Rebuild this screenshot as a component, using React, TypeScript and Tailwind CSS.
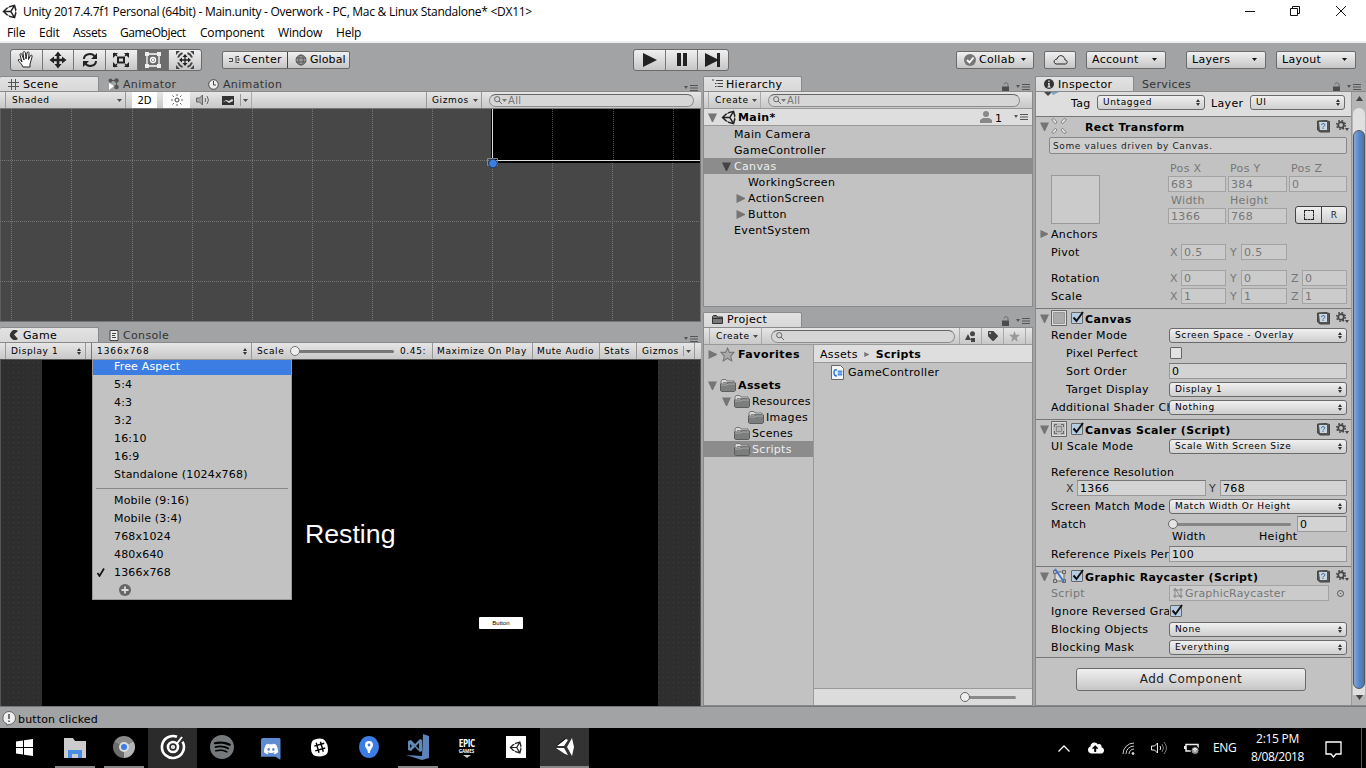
import React from "react";
import type { ReactNode } from "react";
import { SiSpotify, SiDiscord } from "react-icons/si";
import { FaChrome, FaCloudUploadAlt, FaTag } from "react-icons/fa";

const SMALL = "text-[9px] tracking-[0.62px] leading-[11px]";
const BTN = "border border-[#6b6b6b] bg-linear-to-b from-[#f0f0f0] to-[#c6c6c6]";
const STRIP = "flex shrink-0 border-t border-[#8a8a8a] bg-linear-to-b from-[#e6e6e6] to-[#c8c8c8] text-[9px] tracking-[0.62px] leading-[11px]";

function Unity({ className, fill = "#222" }: { className: string; fill?: string }) {
  return (
    <svg viewBox="0 0 512 512" className={className} fill={fill}>
      <path d="M498.11 206.4 445.31 14.72 248.2 66.08 219 116.14l-59.2-.43L15.54 256l144.28 140.32 59.17-.43 29.24 50 197.08 51.36 52.8-191.62-30-49.63ZM223.77 124.2 374.55 86.51 288 232.33H114.87Zm0 263.63L114.87 279.71H288l86.55 145.81Zm193 14L330.17 256l86.58-145.84L458.56 256Z" />
    </svg>
  );
}

function Tri({ dir, fill = "#757575", size = "w-[9px] h-[9px]" }: { dir: "down" | "right"; fill?: string; size?: string }) {
  return (
    <svg viewBox="0 0 9 9" className={`shrink-0 ${size}`} fill={fill}>
      {dir === "down" ? <path d="M0 .5h9L5 9H4z" /> : <path d="M.5 0 9 4v1L.5 9z" />}
    </svg>
  );
}

function Caret({ className = "", fill = "#4a4a4a" }: { className?: string; fill?: string }) {
  return (
    <svg viewBox="0 0 5 3" className={`h-[3px] w-[5px] shrink-0 ${className}`} fill={fill}>
      <path d="M0 0h5L2.500 3z" />
    </svg>
  );
}

function UpDown({ className = "" }: { className?: string }) {
  return (
    <svg viewBox="0 0 4 7" className={`h-[7px] w-[4px] shrink-0 ${className}`} fill="#333">
      <path d="M0 3 2 0l2 3zM0 4h4L2 7z" />
    </svg>
  );
}

function MenuGlyph() {
  return (
    <svg viewBox="0 0 14 6" className="h-[6px] w-[14px] shrink-0" fill="#555">
      <path d="M0 1h4L2 4zM6 0h8v1H6zM6 2.500h8v1H6zM6 5h8v1H6z" />
    </svg>
  );
}

function Lock() {
  return (
    <svg viewBox="0 0 9 10" className="mr-[6px] h-[10px] w-[9px]">
      <path d="M1 4.500h7V10H1z" fill="#4c4c4c" />
      <path d="M7 5V2.500C7 .2 3 .2 3 2.500" fill="none" stroke="#666" />
    </svg>
  );
}

function Folder({ className = "" }: { className?: string }) {
  return (
    <svg viewBox="0 0 16 13" className={`h-[13px] w-4 shrink-0 ${className}`}>
      <path d="M1 12V2l1-1.500h4l1 1.500h7v3" fill="#d8d8d8" stroke="#777" />
      <path d="M3 3.500h10" stroke="#888" />
      <path d="M.5 5h6l1-1h8v7.500l-1 1H1.500l-1-1z" fill="#7c7e7e" stroke="#5d5f5f" />
      <path d="M1 6h6l1-1h7" stroke="#aaa" fill="none" />
    </svg>
  );
}

function Search({ text = "", width }: { text?: string; width: string }) {
  return (
    <div className={`flex h-[13px] items-center rounded-full border border-[#8c8c8c] border-t-[#666] bg-[#d6d6d6] pl-[4px] text-[10px] tracking-[0.300px] text-[#777] ${width}`}>
      <svg viewBox="0 0 8 8" className="size-2" fill="none" stroke="#666">
        <circle cx="3.200" cy="3.200" r="2.600" />
        <path d="m5 5 3 3" />
      </svg>
      {text && <Caret className="mr-px" fill="#777" />}
      {text}
    </div>
  );
}

function Tab({ children, width, active = true }: { children: ReactNode; width: string; active?: boolean }) {
  return (
    <div className={`flex h-[15px] items-center border-t text-[11px] tracking-[0.350px] ${width} ${active ? "rounded-t-[2px] border-r border-[#8a8a8a] bg-linear-to-b from-[#e2e2e2] to-[#d8d8d8]" : "border-transparent text-[#333]"}`}>
      {children}
    </div>
  );
}

/* ---------- Top bars ---------- */

function TitleBar() {
  return (
    <div className="bg-white font-['Open_Sans',sans-serif] text-xs text-black">
      <div className="flex h-[22px] items-center pl-[2px]">
        <Unity className="mr-[6px] size-[15px]" />
        <span className="pt-[2px] whitespace-nowrap tracking-[-0.268px]">Unity 2017.4.7f1 Personal (64bit) - Main.unity - Overwork - PC, Mac &amp; Linux Standalone* &lt;DX11&gt;</span>
        <svg viewBox="0 0 110 12" className="mr-[12px] ml-auto h-3 w-[110px]" fill="none" stroke="#111">
          <path d="M1 6.500h10" />
          <path d="M46.500 3.500h7v7h-7zM48.500 3v-1.500h7v7H54" />
          <path d="m92 1 10 10m0-10-10 10" />
        </svg>
      </div>
      <div className="flex h-[21px] items-center border-b-2 border-[#eee] pt-[2px] pl-[7px] tracking-[-0.200px]">
        <span className="w-[32px]">File</span>
        <span className="w-[34px]">Edit</span>
        <span className="w-[47px] tracking-[-0.350px]">Assets</span>
        <span className="w-[80px] tracking-[-0.400px]">GameObject</span>
        <span className="w-[78px]">Component</span>
        <span className="w-[58px]">Window</span>
        <span>Help</span>
      </div>
    </div>
  );
}

function ToolIcon({ kind }: { kind: number }) {
  const light = kind === 4;
  return (
    <svg viewBox="0 0 20 20" className="size-5" fill="none" stroke={light ? "#fff" : "#222"} strokeWidth="1.300">
      {kind === 0 && <path d="M7 17c-1-3-4-5-5-7 1-1 2-1 4 2L4 5c0-2 2-2 2 0l2 5-1-7c0-2 2-2 2.500 0l.5 6 1-6c.5-2 2.500-1 2 .5l-.5 6 2-4c1-1 2 0 1.500 1.500L14 14v3z" fill="#fff" strokeWidth="1" />}
      {kind === 1 && <path d="M8.700 8.700V6H6.500L10 1.500 13.500 6h-2.200v2.700H14V6.500l4.500 3.500-4.500 3.500v-2.200h-2.700V14h2.200L10 18.500 6.500 14h2.200v-2.700H6v2.200L1.500 10 6 6.500v2.200z" fill="#222" stroke="none" />}
      {kind === 2 && <g strokeWidth="2"><path d="M4 9c0-5 8-7 11-2M16 11c0 5-8 7-11 2" /><path d="M17 3v6h-6zM3 17v-6h6z" fill="#222" stroke="none" /></g>}
      {kind === 3 && <g><path d="M7 7.500h6v5H7z" strokeWidth="2" /><path d="M6 6 3 3m11 3 3-3M6 14l-3 3m11-3 3 3" /><path d="M2 3h5L2 8zM18 3v5l-5-5zM2 17v-5l5 5zM18 17h-5l5-5z" fill="#222" stroke="none" /></g>}
      {kind === 4 && <g><path d="M4 4h12v12H4z" /><path d="M2 2h4v4H2zM14 2h4v4h-4zM2 14h4v4H2zM14 14h4v4h-4z" fill="#eee" stroke="none" /><circle cx="10" cy="10" r="2.500" /><circle cx="10" cy="10" r=".5" /></g>}
      {kind === 5 && <g><path d="M3 7.500A8 8 0 0 1 7.500 3M12.500 3A8 8 0 0 1 17 7.500M17 12.500a8 8 0 0 1-4.500 4.500M7.500 17A8 8 0 0 1 3 12.500" stroke="#444" strokeWidth="2" /><path d="M1 5V1h4zM15 1h4v4zM19 15v4h-4zM5 19H1v-4z" fill="#444" stroke="none" /><path d="M10 6v8M6 10h8" /><path d="m10 4 2.500 3h-5zM10 16l-2.500-3h5zM4 10l3-2.500v5zM16 10l-3 2.500v-5z" fill="#222" stroke="none" /></g>}
    </svg>
  );
}

function TopButton({ label, width }: { label: string; width: string }) {
  return (
    <div className={`flex h-[18px] items-center rounded-[2px] pl-[5px] ${BTN} ${width}`}>
      {label}
      <Caret className="mr-[8px] ml-auto" fill="#111" />
    </div>
  );
}

function Toolbar() {
  return (
    <div className="flex h-[33px] shrink-0 items-center text-[11px] tracking-[0.300px]">
      <div className={`ml-[10px] flex h-[22px] w-[192px] overflow-hidden rounded-[3px] ${BTN}`}>
        {[0, 1, 2, 3, 4, 5].map((k) => (
          <div key={k} className={`flex w-8 items-center justify-center border-r border-[#777] last:border-0 ${k === 4 ? "bg-[#6c6c6c]" : ""}`}>
            <ToolIcon kind={k} />
          </div>
        ))}
      </div>
      <div className={`ml-[20px] flex h-[18px] w-[128px] rounded-[2px] ${BTN}`}>
        <div className="flex w-[65px] items-center border-r border-[#444] pl-[6px]">
          <svg viewBox="0 0 11 8" className="mr-[3px] h-2 w-[11px]" fill="none" stroke="#444"><path d="M0 2.500h3.500v3H0M7 0v7M7.500.5H10M7.500 6.500H10" /><path d="M8.500 2h2v3h-2z" fill="#777" stroke="none" /></svg>
          Center
        </div>
        <div className="flex items-center pl-[7px]">
          <svg viewBox="0 0 12 12" className="mr-[3px] size-3" fill="#999" stroke="#555" strokeWidth=".9"><circle cx="6" cy="6" r="5" /><path d="M1 4h10M1 8h10" fill="none" /><ellipse cx="6" cy="6" rx="2.300" ry="5" fill="none" /></svg>
          <span className="tracking-[0.100px]">Global</span>
        </div>
      </div>
      <div className={`ml-[283px] flex h-[22px] w-[96px] rounded-[3px] ${BTN}`}>
        <div className="flex w-8 items-center justify-center border-r border-[#777]"><svg viewBox="0 0 14 14" className="size-[14px]" fill="#222"><path d="M0 0v14l14-7z" /></svg></div>
        <div className="flex w-8 items-center justify-center border-r border-[#777]"><svg viewBox="0 0 10 13" className="h-[13px] w-[10px]" fill="#222"><path d="M0 0h4v13H0zM6 0h4v13H6z" /></svg></div>
        <div className="flex w-[30px] items-center justify-center"><svg viewBox="0 0 16 14" className="h-[14px] w-4" fill="#222"><path d="M0 0v14l12-6v6h3V0h-3v6z" /></svg></div>
      </div>
      <div className={`ml-[227px] flex h-[18px] w-[78px] items-center rounded-[2px] pl-[7px] ${BTN}`}>
        <svg viewBox="0 0 12 12" className="mr-[3px] size-3"><circle cx="6" cy="6" r="6" fill="#777" /><path d="m3 6 2.500 2.500L9.500 3.500" fill="none" stroke="#fff" strokeWidth="1.800" /></svg>
        Collab
        <Caret className="mr-[7px] ml-auto" fill="#111" />
      </div>
      <div className={`ml-[10px] flex h-[18px] w-[32px] items-center justify-center rounded-[2px] ${BTN}`}>
        <svg viewBox="0 0 15 11" className="h-[11px] w-[15px]" fill="none" stroke="#222"><path d="M3.500 10h9c2.500-.5 2-4-.5-4 0-4-6-7-8-1-4 .5-3.500 5-.5 5z" /></svg>
      </div>
      <div className="ml-[10px]"><TopButton label="Account" width="w-20" /></div>
      <div className="ml-[20px]"><TopButton label="Layers" width="w-20" /></div>
      <div className="ml-[10px]"><TopButton label="Layout" width="w-20" /></div>
    </div>
  );
}

/* ---------- Scene and Game ---------- */

function ScenePanel() {
  return (
    <section className="flex h-[246px] flex-col">
      <div className="flex h-[15px] items-center">
        <Tab width="w-[99px]">
          <svg viewBox="0 0 11 11" className="mr-[4px] ml-[8px] size-[11px]" stroke="#555"><path d="M3.500 0v11M7.500 0v11M0 3.500h11M0 7.500h11" /></svg>
          Scene
        </Tab>
        <Tab width="w-[109px]" active={false}>
          <svg viewBox="0 0 12 12" className="mr-[3px] ml-[9px] size-3"><g fill="#555"><circle cx="2.500" cy="2.500" r="2" /><circle cx="8.500" cy="2.500" r="2.300" /><circle cx="8.500" cy="9" r="2.300" /><path d="M2 2h6v1H2zM8 3h1v6H8z" /></g><path d="M1 5v7l5-4z" fill="#fff" /></svg>
          Animator
        </Tab>
        <Tab width="w-[100px]" active={false}>
          <svg viewBox="0 0 11 11" className="mr-[4px] size-[11px]" fill="#eee" stroke="#444"><circle cx="5.500" cy="5.500" r="4.800" /><path d="M5.500 2v4H8" fill="none" /></svg>
          Animation
        </Tab>
        <div className="mt-[8px] mr-[3px] ml-auto"><MenuGlyph /></div>
      </div>
      <div className={`${STRIP} h-[18px] items-stretch border-b border-b-[#777]`}>
        <div className="w-[6px] border-r border-[#999]" />
        <div className="flex w-[120px] items-center border-r border-[#999] pl-[6px]">Shaded<Caret className="mr-[3px] ml-auto" /></div>
        <div className="ml-[6px] flex w-[25px] items-center justify-center bg-white text-[10px] tracking-normal">2D</div>
        <div className="ml-[6px] flex w-[27px] items-center justify-center bg-[#fafafa]">
          <svg viewBox="0 0 12 12" className="size-3" fill="none" stroke="#444"><circle cx="6" cy="6" r="2" /><path d="M6 0v2M6 10v2M0 6h2M10 6h2M1.500 1.500l1.500 1.500M9 9l1.500 1.500M10.500 1.500 9 3M3 9l-1.500 1.500" strokeWidth=".8" /></svg>
        </div>
        <div className="flex w-[26px] items-center justify-center">
          <svg viewBox="0 0 14 12" className="h-3 w-[14px]" fill="#aaa" stroke="#666"><path d="M.5 4h3l3-3v10l-3-3h-3z" /><path d="M9 4q1.500 2 0 4M11 2q3 4 0 8" fill="none" /></svg>
        </div>
        <div className="flex w-[36px] items-center border-r border-[#aaa] pl-[6px]">
          <svg viewBox="0 0 12 9" className="mr-[6px] h-[9px] w-3"><path fill="#333" d="M0 0h12v9H0z" /><path d="M1 6l3-2 3 1 3-2 1 1v4H1z" fill="#ddd" /><path d="M1 6l3-1 3 2 4-2v3H1z" fill="#333" /></svg>
          <div className="h-3 border-l border-[#999]" /><Caret className="ml-[2px]" />
        </div>
        <div className="ml-auto flex w-[56px] items-center border-x border-[#999] pl-[5px]">Gizmos<Caret className="mr-[3px] ml-auto" /></div>
        <div className="mr-[7px] ml-[7px] flex items-center"><Search text="All" width="w-[205px]" /></div>
      </div>
      <svg viewBox="0 0 701 213" className="h-[213px] w-[701px] shrink-0 bg-[#474747]">
        <path d="M491 0h210v54H491z" fill="#000" />
        <path d="M11.500 0v213M71.500 0v213M132.500 0v213M192.500 0v213M252.500 0v213M312.500 0v213M372.500 0v213M432.500 0v213M492.500 54v159M552.500 54v159M612.500 54v159M672.500 54v159M0 51.500h491M0 112.500h701M0 172.500h701" stroke="#777" strokeDasharray="1 1" />
        <path d="M552.500 0v51M613.500 0v51M673.500 0v51" stroke="#555" strokeDasharray="1 1" />
        <path d="M492.500 0v52M490 51.500h211" stroke="#ddd" />
        <path d="M487.500 49.500h10v7h-10z" stroke="#888" fill="none" />
        <circle cx="493" cy="54.500" r="4.300" fill="#3d7fe0" stroke="#153969" />
        <path d="M0 0v213M700.500 0v213M0 212.500h701" stroke="#777" />
      </svg>
    </section>
  );
}

function AspectMenu() {
  const first = ["5:4", "4:3", "3:2", "16:10", "16:9", "Standalone (1024x768)"];
  const second = ["Mobile (9:16)", "Mobile (3:4)", "768x1024", "480x640", "1366x768"];
  return (
    <div className="absolute top-[-1px] left-[91px] z-10 flex h-[241px] w-[200px] flex-col border border-[#999] bg-[#c2c2c2] text-[11px] tracking-[0.180px]">
      <div className="flex h-[15px] items-center bg-[#3c7de4] pb-[2px] pl-[21px] text-white">Free Aspect</div>
      {first.map((t) => <div key={t} className="flex h-[18px] items-center pl-[21px]">{t}</div>)}
      <div className="mx-[3px] mt-[5px] mb-[2px] border-t border-[#888]" />
      {second.map((t) => (
        <div key={t} className="flex h-[18px] items-center">
          <span className="flex w-[21px] pl-[4px]">
            {t === "1366x768" && <svg viewBox="0 0 8 9" className="h-[9px] w-2" fill="none" stroke="#111" strokeWidth="1.700"><path d="m.5 5 2 3L7 .5" /></svg>}
          </span>
          {t}
        </div>
      ))}
      <svg viewBox="0 0 12 12" className="mt-[3px] ml-[26px] size-3"><circle cx="6" cy="6" r="6" fill="#666" /><path d="M6 2.500v7M2.500 6h7" stroke="#ddd" strokeWidth="1.800" /></svg>
    </div>
  );
}

function GamePanel() {
  return (
    <section className="mt-[5px] flex grow flex-col">
      <div className="flex h-[15px] items-center">
        <Tab width="w-[99px]">
          <svg viewBox="0 0 10 10" className="mr-[4px] ml-[9px] size-[10px]" fill="#333"><path d="M9 1 5 4.500 9 9A5 5 0 1 1 9 1z" /></svg>
          Game
        </Tab>
        <Tab width="w-[100px]" active={false}>
          <svg viewBox="0 0 10 11" className="mr-[4px] ml-[10px] h-[11px] w-[10px]" fill="#eee" stroke="#444"><path d="M1 .5h8v10H1zM3 3.500h4M3 5.500h3M3 7.500h4" /></svg>
          Console
        </Tab>
        <div className="mt-[8px] mr-[3px] ml-auto"><MenuGlyph /></div>
      </div>
      <div className={`${STRIP} h-[18px] items-stretch border-b border-b-[#555]`}>
        <div className="w-[6px] border-r border-[#999]" />
        <div className="flex w-[80px] items-center border-r border-[#999] pl-[5px]">Display 1<UpDown className="mr-[4px] ml-auto" /></div>
        <div className="w-[6px] border-r border-[#777]" />
        <div className="flex w-[160px] items-center border-r border-[#999] pl-[5px] tracking-[0.900px]">1366x768<UpDown className="mr-[4px] ml-auto" /></div>
        <div className="flex w-[181px] items-center border-r border-[#999] pl-[5px]">
          <span className="w-[33px]">Scale</span>
          <div className="z-10 -mr-1 size-[10px] rounded-full border border-[#777] bg-[#eee]" />
          <div className="mr-[6px] h-[3px] w-[98px] rounded bg-[#777]" />
          0.45:
        </div>
        <div className="flex w-[100px] items-center border-r border-[#999] pl-[4px]">Maximize On Play</div>
        <div className="flex w-[67px] items-center border-r border-[#999] pl-[4px]">Mute Audio</div>
        <div className="flex w-[37px] items-center border-r border-[#999] pl-[4px]">Stats</div>
        <div className="flex w-[58px] items-center border-r border-[#999] pl-[5px]">
          Gizmos<div className="mr-[2px] ml-auto h-[10px] border-l border-[#999]" /><Caret className="mr-[3px]" />
        </div>
      </div>
      <div className="relative flex grow border-x border-[#555] bg-[#2e2e2e] bg-[radial-gradient(#3d3d3d_0.700px,transparent_0.700px)] bg-size-[5px_5px]">
        <AspectMenu />
        <div className="ml-[41px] w-[616px] bg-black font-['Liberation_Sans',Arial,sans-serif]">
          <div className="mt-[158px] ml-[263px] text-[26.700px] leading-8 text-white">Resting</div>
          <div className="mt-[67px] ml-[437px] flex h-[12px] w-[44px] items-center justify-center rounded-[1px] bg-white text-[6px] text-black">Button</div>
        </div>
      </div>
    </section>
  );
}

/* ---------- Hierarchy and Project ---------- */

function HierarchyPanel() {
  return (
    <section className="flex h-[231px] flex-col">
      <div className="flex h-[15px] items-center">
        <Tab width="w-[99px] border-l">
          <svg viewBox="0 0 11 10" className="mr-[3px] ml-[8px] h-[10px] w-[11px]" stroke="#444"><path d="M0 1h2M4 1.500h7M3 4.500h1.500M5.500 4.500H11M3 7.500h1.500M5.500 7.500H11" /></svg>
          Hierarchy
        </Tab>
        <div className="mt-[6px] mr-[3px] ml-auto flex items-center"><Lock /><MenuGlyph /></div>
      </div>
      <div className="flex grow flex-col border border-t-0 border-[#8a8a8a] bg-[#c2c2c2]">
        <div className={`${STRIP} h-[18px] border-b border-b-[#999]`}>
          <div className="w-[5px] border-r border-[#aaa]" />
          <div className="mr-[7px] flex w-[52px] items-center border-r border-[#aaa] pl-[6px]">Create<Caret className="mr-[3px] ml-auto" /></div>
          <div className="flex items-center"><Search text="All" width="w-[252px]" /></div>
        </div>
        <div className="flex h-[17px] shrink-0 items-center border-b border-[#999] bg-[#dedede] pl-[4px]">
          <Tri dir="down" />
          <Unity className="mr-[2px] ml-[4px] size-[15px]" />
          <span className="pt-px text-[11px] font-bold tracking-[0.400px]">Main*</span>
          <svg viewBox="0 0 12 12" className="mr-[3px] ml-auto size-3" fill="#888"><circle cx="6" cy="3" r="3" /><path d="M0 12V9l3-2h6l3 2v3z" /></svg>
          <span className="pt-[2px]">1</span><div className="mr-[4px] ml-[12px] flex"><MenuGlyph /></div>
        </div>
        <div className="text-[11px] leading-[18px] tracking-[0.350px]">
          <div className="h-4 pl-[30px]">Main Camera</div>
          <div className="h-4 pl-[30px]">GameController</div>
          <div className="flex h-4 items-center gap-[3px] bg-[#8c8c8c] pl-[18px] text-[#eee]"><Tri dir="down" fill="#444" /><span className="pt-[2px]">Canvas</span></div>
          <div className="h-4 pl-[44px]">WorkingScreen</div>
          <div className="flex h-4 items-center gap-[3px] pl-[32px]"><Tri dir="right" /><span className="pt-[2px]">ActionScreen</span></div>
          <div className="flex h-4 items-center gap-[3px] pl-[32px]"><Tri dir="right" /><span className="pt-[2px]">Button</span></div>
          <div className="h-4 pl-[30px]">EventSystem</div>
        </div>
      </div>
    </section>
  );
}

function ProjectPanel() {
  return (
    <section className="mt-[4px] flex grow flex-col">
      <div className="flex h-[16px] items-end">
        <Tab width="w-[99px] border-l pb-[2px]">
          <svg viewBox="0 0 11 9" className="mr-[4px] ml-[8px] h-[9px] w-[11px]" fill="#777" stroke="#333"><path d="M.5 8.500v-7l1-1h3l1 1.500h5v6.500zM1 3.500h9" /></svg>
          Project
        </Tab>
        <div className="mr-[3px] mb-px ml-auto flex items-center"><Lock /><MenuGlyph /></div>
      </div>
      <div className="flex grow flex-col border border-t-0 border-[#8a8a8a] bg-[#c2c2c2]">
        <div className={`${STRIP} h-[18px] border-b border-b-[#999]`}>
          <div className="w-[6px] border-r border-[#aaa]" />
          <div className="mr-[9px] flex w-[52px] items-center border-r border-[#aaa] pl-[6px]">Create<Caret className="mr-[3px] ml-auto" /></div>
          <div className="flex items-center"><Search width="w-[184px]" /></div>
          <div className="ml-[4px] flex w-[23px] items-center justify-center border-x border-[#aaa]"><svg viewBox="0 0 11 11" className="size-[11px]" fill="#444"><path d="M3 3l3 6H0zM6 7h4v4H6z" /><circle cx="7.500" cy="2.800" r="2.500" /></svg></div>
          <div className="flex w-[22px] items-center justify-center border-r border-[#aaa]"><FaTag className="size-[10px] text-[#444]" /></div>
          <div className="flex w-[22px] items-center justify-center border-r border-[#aaa]"><svg viewBox="0 0 12 12" className="size-[11px]" fill="#999"><path d="m6 0 1.500 4H12L8.500 7l1 5L6 9l-3.500 3 1-5L0 4h4.500z" /></svg></div>
        </div>
        <div className="flex grow">
          <div className="w-[110px] overflow-hidden border-r border-[#999] text-[11px] leading-4 tracking-[0.300px]">
            <div className="flex h-[18px] items-center pl-[4px] font-bold tracking-[0.500px]">
              <Tri dir="right" />
              <svg viewBox="0 0 14 14" className="mr-[3px] ml-[3px] size-[15px] shrink-0" fill="#aaa" stroke="#777"><path d="m7 1 1.800 4H13l-3 3.500 1 4.500-4-2.500L3 13l1-4.500L1 5h4.200z" /></svg>
              <span className="pt-px">Favorites</span>
            </div>
            <div className="mt-[14px] flex h-4 items-center pl-[4px] font-bold tracking-[0.400px]"><Tri dir="down" /><Folder className="mr-[2px] ml-[3px]" /><span className="pt-px">Assets</span></div>
            <div className="flex h-4 items-center pl-[18px]"><Tri dir="down" /><Folder className="mr-[2px] ml-[3px]" /><span className="pt-[2px]">Resources</span></div>
            <div className="flex h-4 items-center pl-[44px]"><Folder className="mr-[2px]" /><span className="pt-[2px]">Images</span></div>
            <div className="flex h-4 items-center pl-[30px]"><Folder className="mr-[2px]" /><span className="pt-[2px]">Scenes</span></div>
            <div className="flex h-4 items-center bg-[#8c8c8c] pl-[30px] text-[#eee]"><Folder className="mr-[2px]" /><span className="pt-[2px]">Scripts</span></div>
          </div>
          <div className="flex grow flex-col text-[11px] tracking-[0.320px]">
            <div className="flex h-[18px] items-center border-b border-[#999] bg-[#dedede] pt-px pl-[6px]">Assets<Tri dir="right" size="size-[5px] ml-[6px] mr-[7px]" /><b className="tracking-[0.300px]">Scripts</b></div>
            <div className="flex h-[18px] items-center pl-[17px]">
              <svg viewBox="0 0 13 15" className="mr-[4px] h-[15px] w-[13px]" fill="#f4f4f4" stroke="#666"><path d="M.5.5h9l3 3v11H.5z" /><path d="M6 5Q3 4 3 7.500T6 11" fill="none" stroke="#2877dd" strokeWidth="1.500" /><path d="M8 5v6M10 5v6M6.500 6.800h5M6.500 9.200h5" stroke="#2877dd" strokeWidth=".9" /></svg>
              GameController
            </div>
            <div className="mt-auto flex h-[17px] items-center border-t border-[#999] bg-[#dcdcdc] pl-[146px]">
              <div className="z-10 size-[10px] rounded-full border border-[#666] bg-[#eee]" />
              <div className="-ml-1 h-[3px] w-[50px] rounded bg-[#8a8a8a]" />
            </div>
          </div>
        </div>
      </div>
    </section>
  );
}

/* ---------- Inspector ---------- */

function Field({ children, className = "w-[178px]", off = false }: { children: ReactNode; className?: string; off?: boolean }) {
  return <div className={`flex h-4 shrink-0 items-center border pl-[2px] ${off ? "border-[#a3a3a3] bg-[#cbcbcb] text-[#777]" : "border-[#999] border-t-[#777] bg-[#d3d3d3]"} ${className}`}>{children}</div>;
}

function Popup({ children, className = "w-[178px]" }: { children: ReactNode; className?: string }) {
  return <div className={`flex h-[15px] shrink-0 items-center rounded-[3px] border border-[#6b6b6b] bg-linear-to-b from-[#f0f0f0] to-[#cfcfcf] pl-[5px] ${SMALL} ${className}`}>{children}<UpDown className="mr-[4px] ml-auto" /></div>;
}

function Check({ on }: { on: boolean }) {
  return (
    <div className={`size-3 shrink-0 rounded-[1px] border border-[#666] ${on ? "bg-[#b4cde2]" : "bg-[#e2e2e2]"}`}>
      {on && <svg viewBox="0 0 12 12" className="-mt-[2px] size-3" fill="none" stroke="#111" strokeWidth="2"><path d="m1.500 6.500 3 3.500L11 1" /></svg>}
    </div>
  );
}

function Row({ label, children, mt = "mt-[2px]", indent = false, dim = false }: { label: string; children?: ReactNode; mt?: string; indent?: boolean; dim?: boolean }) {
  return (
    <div className={`flex h-4 shrink-0 items-center ${mt}`}>
      <div className={`h-4 shrink-0 leading-[18px] whitespace-nowrap ${children ? "w-[133px] overflow-hidden" : ""} ${indent ? "pl-[30px]" : "pl-[15px]"} ${dim ? "text-[#777]" : ""}`}>{label}</div>
      {children}
    </div>
  );
}

function Header({ title, icon, check = true }: { title: string; icon: ReactNode; check?: boolean }) {
  return (
    <div className="flex h-4 shrink-0 items-center pl-[4px]">
      <Tri dir="down" />
      <div className="ml-[2px] flex w-[16px]">{icon}</div>
      <div className="ml-[4px] w-[14px]">{check && <Check on />}</div>
      <b className="pt-[2px] tracking-[0.370px]">{title}</b>
      <svg viewBox="0 0 13 13" className="ml-auto size-[13px]"><path d="M.5 1 9 .5l3.500 1V12H3L.5 10z" fill="#555" stroke="#444" /><path d="M2 2h8v8H3z" fill="#ccd6df" /><path d="M4 5q2-3 4-.5c0 2-2 1-2 3M6 8v1" fill="none" stroke="#3d71aa" /></svg>
      <svg viewBox="0 0 13 12" className="mr-[2px] ml-[6px] h-3 w-[13px]"><circle cx="5" cy="5" r="2.800" fill="none" stroke="#444" strokeWidth="1.800" /><circle cx="5" cy="5" r="4.300" fill="none" stroke="#444" strokeWidth="1.500" strokeDasharray="1.700 1.680" /><path d="M9 8h4l-2 3z" fill="#444" /></svg>
    </div>
  );
}

function Rule({ className }: { className: string }) {
  return <div className={`shrink-0 border-t border-[#777] ${className}`} />;
}

function Axis({ name, value, width, field, off = true }: { name: string; value: string; width: string; field: string; off?: boolean }) {
  return (
    <div className={`flex shrink-0 items-center ${width}`}>
      <span className={`w-[12px] pl-px ${off ? "text-[#777]" : "text-[#333]"}`}>{name}</span>
      <Field off={off} className={field}>{value}</Field>
    </div>
  );
}

function Axes({ values }: { values: string[] }) {
  return (
    <div className="flex">
      <Axis name="X" value={values[0]} width="w-[60px]" field="w-[45px]" />
      <Axis name="Y" value={values[1]} width="w-[61px]" field="w-[46px]" />
      {values[2] && <Axis name="Z" value={values[2]} width="w-[57px]" field="w-[45px]" />}
    </div>
  );
}

function FrameIcon({ kind }: { kind: "canvas" | "scaler" | "ray" | "rect" }) {
  return (
    <svg viewBox="0 0 16 16" className="size-4" fill="none" stroke="#666">
      {kind === "canvas" && <g><path d="M.5.5h15v15H.5z" fill="#ddd" /><path d="M2.500 2.500h11v11h-11z" fill="#aaa" stroke="#999" /></g>}
      {kind === "scaler" && <g><path d="M.5.5h15v15H.5z" fill="#ddd" /><path d="M2 2h12v12H2z" fill="#bbb" stroke="none" /><path d="M3.500 6V3.500H6M10 3.500h2.500V6M12.500 10v2.500H10M6 12.500H3.500V10" /><path d="M5.500 5.500h5v5h-5z" stroke="#888" /></g>}
      {kind === "ray" && <g><path d="M4 4h9v9H4z" fill="#ddd" /><path d="M2.500 2.500h3v3h-3zM11.500 2.500h3v3h-3zM2.500 11.500h3v3h-3zM11.500 11.500h3v3h-3z" fill="#bbb" /><path d="m4 1 9 13" stroke="#4076cd" strokeWidth="2" /></g>}
      {kind === "rect" && <path d="M.5 1.500 3 .5l3 3.500-1.500 2zM15.500 1.500 13 .5 10 4l1.500 2zM.5 14.500 3 15.500 6 12l-1.500-2zM15.500 14.500l-2.500 1-3-3.500 1.500-2z" fill="#e2e2e2" stroke="#888" strokeLinejoin="round" />}
    </svg>
  );
}

function Inspector() {
  return (
    <section className="ml-[2px] flex w-[331px] flex-col">
      <div className="flex h-[15px] items-center">
        <Tab width="w-[99px] border-l">
          <svg viewBox="0 0 10 10" className="mr-[4px] ml-[8px] size-[10px]"><circle cx="5" cy="5" r="5" fill="#333" /><path d="M5 1.500v1.500M4 4.500h1V8M3.500 8h3" stroke="#fff" fill="none" strokeWidth="1.200" /></svg>
          Inspector
        </Tab>
        <Tab width="w-[80px] pl-[8px]" active={false}>Services</Tab>
        <div className="mt-[6px] mr-[5px] ml-auto flex items-center"><Lock /><MenuGlyph /></div>
      </div>
      <div className="flex h-[615px] border-t border-b border-l border-[#8a8a8a] bg-[#c2c2c2]">
        <div className="flex w-[315px] flex-col text-[11px] tracking-[0.350px]">
          <div className="flex h-[24px] shrink-0 items-center bg-[#dedede] pb-[3px]">
            <svg viewBox="0 0 15 4" className="mb-[17px] ml-[8px] h-1 w-[15px]"><path d="M0 0h8L4 4z" fill="#444" /><path d="M7 0h8l-6 3z" fill="#76a3ca" /></svg>
            <span className="ml-[12px] w-[26px] pt-[2px]">Tag</span>
            <Popup className="w-[108px]">Untagged</Popup>
            <span className="ml-[6px] w-[39px] pt-[2px]">Layer</span>
            <Popup className="w-[95px]">UI</Popup>
          </div>
          <Rule className="mb-[1px]" />
          <Header title="Rect Transform" check={false} icon={<FrameIcon kind="rect" />} />
          <div className={`mt-[3px] ml-[13px] flex h-[17px] w-[298px] shrink-0 items-center rounded-[2px] border border-[#888] bg-[#cecece] pt-px pl-[3px] text-[#222] ${SMALL}`}>Some values driven by Canvas.</div>
          <div className="mt-[6px] flex h-[65px] shrink-0 text-[#777]">
            <div className="mt-[15px] mr-[68px] ml-[15px] h-[49px] w-[49px] border border-[#999] bg-[#cbcbcb]" />
            <div className="mr-[2px] w-[58px]">
              <div className="h-4 pl-[2px] leading-[17px]">Pos X</div><Field off className="w-[58px]">683</Field>
              <div className="h-4 pl-[3px] leading-[17px]">Width</div><Field off className="w-[58px]">1366</Field>
            </div>
            <div className="mr-[2px] w-[59px]">
              <div className="h-4 pl-[2px] leading-[17px]">Pos Y</div><Field off className="w-[59px]">384</Field>
              <div className="h-4 pl-[2px] leading-[17px]">Height</div><Field off className="w-[59px]">768</Field>
            </div>
            <div className="w-[58px]">
              <div className="h-4 pl-[2px] leading-[17px]">Pos Z</div><Field off className="w-[58px]">0</Field>
              <div className="mt-[14px] ml-[6px] flex h-[18px] w-[52px] rounded-[3px] border border-[#444] bg-linear-to-b from-[#f0f0f0] to-[#cfcfcf] text-[9px] text-[#222]">
                <div className="flex w-[26px] items-center justify-center border-r border-[#444]"><div className="size-[10px] border border-dashed border-[#222]" /></div>
                <div className="flex w-6 items-center justify-center">R</div>
              </div>
            </div>
          </div>
          <div className="mt-[1px] flex h-4 shrink-0 items-center pl-[4px]"><Tri dir="right" size="size-[8px] mr-[3px]" />Anchors</div>
          <Row label="Pivot"><Axes values={["0.5", "0.5"]} /></Row>
          <Row label="Rotation" mt="mt-[10px]"><Axes values={["0", "0", "0"]} /></Row>
          <Row label="Scale"><Axes values={["1", "1", "1"]} /></Row>
          <Rule className="mt-[4px] mb-[1px]" />
          <Header title="Canvas" icon={<FrameIcon kind="canvas" />} />
          <Row label="Render Mode" mt="mt-[1px]"><Popup>Screen Space - Overlay</Popup></Row>
          <Row label="Pixel Perfect" indent><div className="ml-[1px]"><Check on={false} /></div></Row>
          <Row label="Sort Order" indent><Field>0</Field></Row>
          <Row label="Target Display" indent><Popup>Display 1</Popup></Row>
          <Row label="Additional Shader Ch"><Popup>Nothing</Popup></Row>
          <Rule className="mt-[4px] mb-[1px]" />
          <Header title="Canvas Scaler (Script)" icon={<FrameIcon kind="scaler" />} />
          <Row label="UI Scale Mode" mt="mt-[1px]"><Popup>Scale With Screen Size</Popup></Row>
          <Row label="Reference Resolution" mt="mt-[10px]" />
          <div className="flex h-4 shrink-0 pl-[29px]">
            <Axis name="X" value="1366" off={false} width="w-[143px]" field="w-[129px]" />
            <Axis name="Y" value="768" off={false} width="w-[139px]" field="w-[127px]" />
          </div>
          <Row label="Screen Match Mode"><Popup>Match Width Or Height</Popup></Row>
          <Row label="Match">
            <div className="z-10 -ml-px size-[10px] rounded-full border border-[#666] bg-[#e4e4e4]" />
            <div className="-ml-1 mr-[6px] h-[3px] w-[117px] rounded bg-[#858585]" />
            <Field className="w-[50px]">0</Field>
          </Row>
          <div className="-mt-[3px] flex h-[14px] shrink-0 items-center pl-[136px]"><span className="w-[87px]">Width</span>Height</div>
          <Row label="Reference Pixels Per" mt="mt-[3px]"><Field>100</Field></Row>
          <Rule className="mt-[4px] mb-[1px]" />
          <Header title="Graphic Raycaster (Script)" icon={<FrameIcon kind="ray" />} />
          <Row label="Script" dim mt="mt-[1px]">
            <Field off className="w-[160px]"><svg viewBox="0 0 10 10" className="mr-[2px] ml-[1px] size-[10px]" fill="none" stroke="#888"><path d="M2 2h6v6H2zM0 2h2V0M8 0v2h2M0 8h2v2M8 10V8h2M2 0l6 10" /></svg><span className="tracking-[0.180px]">GraphicRaycaster</span></Field>
            <svg viewBox="0 0 7 7" className="ml-[8px] size-[7px]" fill="none" stroke="#555"><circle cx="3.500" cy="3.500" r="3" /><path d="M3 3.500h1" /></svg>
          </Row>
          <Row label="Ignore Reversed Gra"><div className="ml-[1px]"><Check on /></div></Row>
          <Row label="Blocking Objects"><Popup>None</Popup></Row>
          <Row label="Blocking Mask"><Popup>Everything</Popup></Row>
          <Rule className="mt-[2px]" />
          <div className={`mt-[10px] ml-[40px] flex h-[23px] w-[230px] shrink-0 items-center justify-center rounded-[3px] pb-[2px] text-[12px] tracking-[0.450px] text-[#222] ${BTN}`}>Add Component</div>
        </div>
        <div className="flex w-[15px] flex-col items-center border-l border-[#999] bg-[#b5b5b5] pt-[4px] pb-[5px]">
          <svg viewBox="0 0 7 5" className="h-[5px] w-[7px]" fill="#444"><path d="M3.500 0 7 5H0z" /></svg>
          <div className="mt-[7px] flex w-[12px] grow flex-col rounded-t-[6px] bg-[#e0e0e0]">
            <div className="mt-[22px] h-[559px] rounded-[6px] border border-[#555] bg-linear-to-r from-[#8aa8cf] via-[#5487d2] to-[#52749f]" />
          </div>
          <svg viewBox="0 0 7 5" className="h-[5px] w-[7px] shrink-0" fill="#444"><path d="M3.500 5 7 0H0z" /></svg>
        </div>
      </div>
    </section>
  );
}

/* ---------- Taskbar ---------- */

function TaskItem({ children, bg = "", line = "" }: { children: ReactNode; bg?: string; line?: string }) {
  return (
    <div className={`flex w-[49px] flex-col items-center ${bg}`}>
      <div className="flex grow items-center justify-center">{children}</div>
      <div className={`h-[2px] shrink-0 ${line}`} />
    </div>
  );
}

function Taskbar() {
  return (
    <div className="flex h-10 bg-black font-['Open_Sans',sans-serif] text-white">
      <TaskItem><svg viewBox="0 0 17 17" className="size-[17px]" fill="#fff"><path d="m0 2.500 7-1V8H0zM8 1.300 17 0v8H8zM0 9h7v6.500l-7-1zM8 9h9v8l-9-1.300z" /></svg></TaskItem>
      <div className="w-[1px]" />
      <TaskItem line="w-10 bg-[#888]"><svg viewBox="0 0 22 20" className="mt-[2px] h-5 w-[22px]"><path d="M0 0h9l2 3h11v17H0z" fill="#ccc" /><path d="M4 20v-8h14v8h-4v-4H8v4z" fill="#4b8de5" /></svg></TaskItem>
      <TaskItem line="w-10 bg-[#888]">
        <div className="flex size-[22px] items-center justify-center rounded-full bg-[conic-gradient(from_-60deg,#8a8a8a_0_120deg,#b5b5b5_120deg_240deg,#6d6d6d_240deg)]">
          <div className="size-[10px] rounded-full border-2 border-[#ddd] bg-[#3c7de4]" />
        </div>
      </TaskItem>
      <TaskItem bg="bg-[#2b2b2b]"><svg viewBox="0 0 26 26" className="size-[26px]" fill="none" stroke="#fff" strokeWidth="2.600"><path d="M17 2.800a11 11 0 1 0 5.500 4.800" /><circle cx="13" cy="13" r="5" /><circle cx="13" cy="13" r=".8" /><path d="M17 9.500 22 3" strokeWidth="2" /></svg></TaskItem>
      <TaskItem><SiSpotify className="size-6 text-[#75797b]" /></TaskItem>
      <TaskItem><div className="mt-1 flex h-[22px] w-[20px] items-start justify-center rounded-[2px] bg-[#5f8bd0] pt-[4px] [clip-path:polygon(0_0,100%_0,100%_100%,75%_85%,0_85%)]"><SiDiscord className="size-[14px] text-white" /></div></TaskItem>
      <TaskItem><svg viewBox="0 0 20 20" className="size-[19px]"><path d="M5 1.500q8-2.500 11 1.500t3 9-4 6.500-9 .5-5-9 4-8.500z" fill="#fff" /><path d="m6.500 5 3 10.500M11 4l3 10.500M4.500 8.500 15 5.500M5.500 13.500l10.500-3" stroke="#000" strokeWidth="1.500" /></svg></TaskItem>
      <TaskItem><svg viewBox="0 0 20 22" className="h-[22px] w-5"><ellipse cx="10" cy="11" rx="10" ry="11" fill="#3c7de4" /><path d="M10 5a4 4 0 0 1 4 4c0 3-3 4-3 8H9c0-4-3-5-3-8a4 4 0 0 1 4-4" fill="#fff" /><circle cx="10" cy="9" r="1.400" fill="#3c7de4" /></svg></TaskItem>
      <TaskItem line="w-10 bg-[#888]"><svg viewBox="0 0 24 26" className="h-[26px] w-6"><path d="m17 0 6 2v22l-7 2L0 21l16 1z" fill="#5c83bc" /><path d="m2 7 3-1 4 4 5-5 2 1v11l-2 1-5-5-4 4-3-1zm2 3v4l2-2zm9-1-3 3 3 3z" fill="#6288b8" fillRule="evenodd" /></svg></TaskItem>
      <TaskItem><div className="flex flex-col items-center leading-none"><span className="h-[11px] scale-x-75 text-[11px] leading-[11px] font-bold tracking-[-0.500px]">EPIC</span><span className="h-[6px] text-[4.500px] leading-[6px] font-bold">GAMES</span><svg viewBox="0 0 8 3" className="mt-[1px] h-[3px] w-2" fill="#ccc"><path d="M0 0h8L4 3z" /></svg></div></TaskItem>
      <TaskItem><div className="flex h-[22px] w-5 items-center justify-center bg-white"><Unity className="size-[13px]" /></div></TaskItem>
      <TaskItem bg="bg-[#333]" line="w-[49px] bg-[#888]"><svg viewBox="0 0 20 20" className="size-5" fill="#fff"><path d="m1 9 9-8-2 7z" fill="#111" /><path d="m2 9 9-7 2 1-4 6zM1 11h8l4 7-3-1zM17 1l2 9-2 9-5-9z" /></svg></TaskItem>
      <div className="ml-auto flex items-center pr-[4px] text-xs">
        <svg viewBox="0 0 12 7" className="mr-[18px] h-[7px] w-3" fill="none" stroke="#fff" strokeWidth="1.300"><path d="m.5 6.500 5.500-5.500 5.500 5.500" /></svg>
        <FaCloudUploadAlt className="mr-[18px] size-4" />
        <svg viewBox="0 0 13 13" className="mr-[16px] size-[13px]" fill="none" stroke="#ccc"><path d="M1 12A11 11 0 0 1 12 1M4 12a8 8 0 0 1 8-8M7 12a5 5 0 0 1 5-5" /><circle cx="11" cy="11.500" r="1" fill="#fff" /></svg>
        <svg viewBox="0 0 16 14" className="mr-[17px] h-[14px] w-4" fill="none" stroke="#eee"><path d="M.5 5h3l3-3v10l-3-3h-3zM9 5q1.500 2 0 4" /><path d="M11 3q3 4 0 8M13 1q5 6 0 12" stroke="#777" /></svg>
        <svg viewBox="0 0 16 13" className="mr-[13px] h-[13px] w-4" fill="none" stroke="#eee"><path d="M2 2.500h12V9H2zM.5 4v3" strokeWidth="1.500" /><circle cx="11" cy="8.500" r="4" fill="#999" stroke="#000" /><path d="M11 6v4M9 8l2-2 2 2" stroke="#fff" /></svg>
        <span className="w-[38px] tracking-[-0.400px]">ENG</span>
        <div className="w-[53px] text-center leading-[18px] whitespace-nowrap"><div className="tracking-[-0.300px]">2:15 PM</div><div className="tracking-[-0.450px]">8/08/2018</div></div>
        <svg viewBox="0 0 17 17" className="mt-[2px] mr-[19px] ml-[21px] size-[17px]" fill="none" stroke="#fff" strokeWidth="1.300"><path d="M1 1h15v12h-5l-2.500 3L6 13H1z" /></svg>
        <div className="h-10 border-l border-[#555]" />
      </div>
    </div>
  );
}

export default function App() {
  return (
    <div className="flex h-[768px] w-[1366px] flex-col overflow-hidden bg-[#a2a3a5] font-['DejaVu_Sans',Verdana,sans-serif] text-[11px] leading-none text-black">
      <TitleBar />
      <Toolbar />
      <main className="flex h-[630px] shrink-0">
        <div className="flex w-[701px] flex-col"><ScenePanel /><GamePanel /></div>
        <div className="ml-[2px] flex w-[330px] flex-col"><HierarchyPanel /><ProjectPanel /></div>
        <Inspector />
      </main>
      <div className="flex h-[22px] shrink-0 items-center border-t border-[#777] pt-[2px] pl-[2px] text-[11px] tracking-[0.150px]">
        <svg viewBox="0 0 14 15" className="mr-[2px] h-[15px] w-[14px]"><path d="M7 .5a6.500 6.500 0 1 1 0 13L5 14.500v-1.500A6.500 6.500 0 0 1 7 .5" fill="#eee" stroke="#666" /><path d="M7 3v5M7 9.500V11" stroke="#555" strokeWidth="1.600" /></svg>
        <span className="pt-px">button clicked</span>
      </div>
      <Taskbar />
    </div>
  );
}
